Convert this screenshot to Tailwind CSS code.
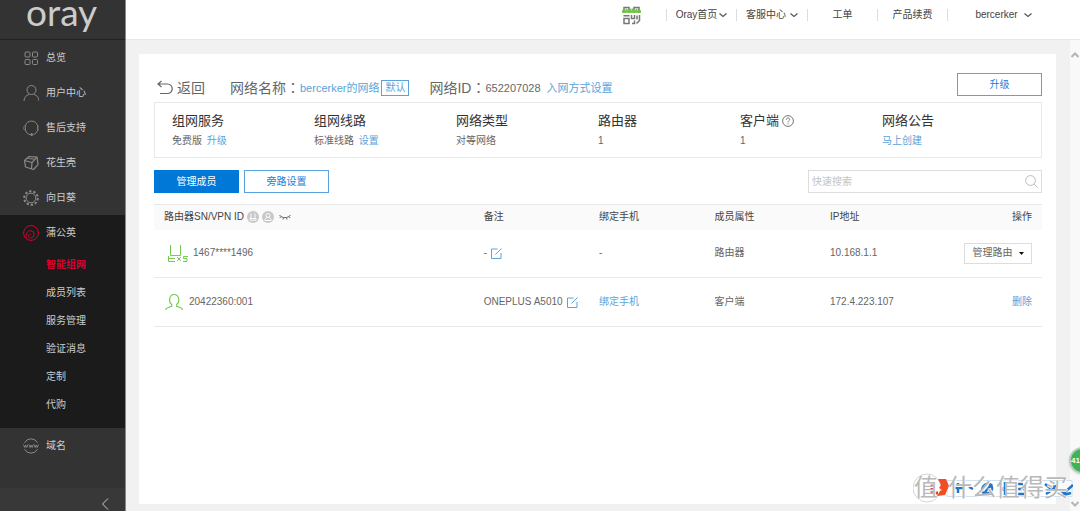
<!DOCTYPE html>
<html lang="zh-CN">
<head>
<meta charset="utf-8">
<meta name="viewport" content="width=device-width, initial-scale=1">
<title>Oray - 智能组网</title>
<script src="https://cdn.jsdelivr.net/npm/@tailwindcss/browser@4"></script>
</head>
<body class="relative flex min-h-screen overflow-hidden bg-[#f1f1f1] font-['Liberation_Sans','Noto_Sans_CJK_SC',sans-serif] text-[10px] leading-4 text-[#666]">

<aside class="flex w-[126px] shrink-0 flex-col border-r border-[#888] bg-[#333] text-[#ccc]">
  <a href="#" class="flex h-10 items-start border-b border-[#222] pl-[26px] font-['Lato',sans-serif] text-[37px] leading-6 text-[#ccc]">oray</a>
  <nav class="flex flex-1 flex-col">
    <a href="#" class="flex h-[35px] items-center gap-[7px] pl-[23px]">
      <svg class="size-4" viewBox="0 0 16 16" fill="none" stroke="#8a8a8a"><rect x="2" y="2" width="5" height="5" rx="1"/><rect x="9.500" y="2" width="5" height="5" rx="1"/><rect x="2" y="9.500" width="5" height="5" rx="1"/><rect x="9.500" y="9.500" width="5" height="5" rx="1"/></svg>总览</a>
    <a href="#" class="flex h-[35px] items-center gap-[7px] pl-[23px]">
      <svg class="size-4" viewBox="0 0 16 16" fill="none" stroke="#8a8a8a"><circle cx="8.500" cy="5" r="4.500"/><path d="M1 16c0-3.500 2-5.500 5-6.600M16 16c0-3.500-2-5.500-5-6.600"/></svg>用户中心</a>
    <a href="#" class="flex h-[35px] items-center gap-[7px] pl-[23px]">
      <svg class="size-4" viewBox="0 0 16 16" fill="none" stroke="#8a8a8a"><path d="M2.500 5.500a6.300 6.300 0 0 1 12 0M2.500 10.500c.8 2.200 2.500 3.800 5 4.200M14.500 10.500c-.7 2-2 3.300-4 3.900"/><path d="M2.500 5.500v5C.2 10.500.2 5.500 2.500 5.500zM14.500 5.500v5c2.200 0 2.200-5 0-5z" stroke-width=".8"/><circle cx="8.700" cy="14.600" r="1" fill="#8a8a8a"/></svg>售后支持</a>
    <a href="#" class="flex h-[35px] items-center gap-[7px] pl-[23px]">
      <svg class="size-4" viewBox="0 0 16 16" fill="none" stroke="#8a8a8a" stroke-width="1.200" stroke-linejoin="round"><path d="M1.500 5.500 6 1.500l8 .7 1 7.500-4.500 4.800-8-2.500zM1.500 5.500l7.500 2 5-5.300M9 7.500l-.5 6.400M5 3.500l6 .5"/></svg>花生壳</a>
    <a href="#" class="flex h-[35px] items-center gap-[7px] pl-[23px]">
      <svg class="size-4" viewBox="0 0 16 16" fill="none" stroke="#8a8a8a"><circle cx="8" cy="8" r="4.800"/><circle cx="8" cy="8" r="6.800" stroke-width="2" stroke-dasharray="2.400 1.872"/></svg>向日葵</a>
    <div class="bg-[#1b1b1b] pb-[9px]">
      <a href="#" class="flex h-9 items-center gap-[7px] pl-[23px]">
        <svg class="size-4" viewBox="0 0 16 16" fill="none" stroke="#d8002f"><circle cx="8" cy="8" r="7.400"/><path d="M3 13.300C2.800 8.500 4.500 5.700 7.500 5.700a3.700 3.700 0 0 1 0 7.400c-1.200 0-2-.8-2-1.900s.8-1.900 2-1.900"/></svg>蒲公英</a>
      <a href="#" class="flex h-7 items-center pl-[46px] font-bold text-[#d8002f]">智能组网</a>
      <a href="#" class="flex h-7 items-center pl-[46px]">成员列表</a>
      <a href="#" class="flex h-7 items-center pl-[46px]">服务管理</a>
      <a href="#" class="flex h-7 items-center pl-[46px]">验证消息</a>
      <a href="#" class="flex h-7 items-center pl-[46px]">定制</a>
      <a href="#" class="flex h-7 items-center pl-[46px]">代购</a>
    </div>
    <a href="#" class="flex h-[35px] items-center gap-[7px] pl-[23px]">
      <svg class="size-4" viewBox="0 0 16 16" fill="none" stroke="#8a8a8a"><path d="M1.500 4.800a7.300 7.300 0 0 1 13 0M1.500 11.200a7.300 7.300 0 0 0 13 0"/><path d="m.5 6.500 1.200 3 1-2.500 1 2.500 1.300-3m.9 0 1.200 3 1-2.500 1 2.500 1.200-3m.7 0 1.200 3 1-2.500 1 2.500 1.200-3" stroke-width=".9"/></svg>域名</a>
  </nav>
  <button type="button" aria-label="收起菜单" class="flex h-[23px] items-center justify-end bg-[#383838] pt-2 pr-4">
    <svg class="h-3 w-2" viewBox="0 0 8 12" fill="none" stroke="#ccc"><path d="M7 .5 1.500 6 7 11.500"/></svg>
  </button>
</aside>

<div class="flex min-w-0 flex-1 flex-col">
  <header class="flex h-10 shrink-0 items-start justify-end border-b border-[#e8e8e8] bg-white pr-[21px] text-[#444]">
    <svg class="mt-1.5 mr-6 h-[19px] w-[21px]" viewBox="0 0 21 19" fill="none" stroke="#777" stroke-width="1.500"><path d="M3 7V1.500h5V7M13 7V1.500h5V7M3 12.500h5v5H3zM2.500 9.700h6M10.500 9v3.500h3V9M11 17.500h2.500v-3M16 9.500v4M18.500 9v5.500L15.500 17.500"/><path d="M1 5.500h19" stroke="#69c73c" stroke-width="2.600"/><path d="M4.500 3.500h2M9.500 2.500v2M11.500 2.500v2M14.500 3.500h2" stroke="#69c73c" stroke-width="1.500"/></svg>
    <nav class="flex h-[30px] items-center">
      <a href="#" class="flex h-3 w-[70px] items-center justify-center gap-0.5 border-l border-[#ddd]">Oray首页<svg class="h-2 w-2" viewBox="0 0 8 8" fill="none" stroke="#555" stroke-width="1.200"><path d="m.5 2.500 3.500 3 3.500-3"/></svg></a>
      <a href="#" class="flex h-3 w-[71px] items-center justify-center gap-1 border-l border-[#ddd]">客服中心<svg class="h-2 w-2" viewBox="0 0 8 8" fill="none" stroke="#555" stroke-width="1.200"><path d="m.5 2.500 3.500 3 3.500-3"/></svg></a>
      <a href="#" class="flex h-3 w-[70px] items-center justify-center border-l border-[#ddd]">工单</a>
      <a href="#" class="flex h-3 w-[70px] items-center justify-center border-l border-[#ddd]">产品续费</a>
      <a href="#" class="flex h-3 w-28 items-center justify-center gap-1.5 border-l border-[#ddd]">bercerker<svg class="h-2 w-2" viewBox="0 0 8 8" fill="none" stroke="#555" stroke-width="1.200"><path d="m.5 2.500 3.500 3 3.500-3"/></svg></a>
    </nav>
  </header>

  <div class="flex flex-1">
    <main class="mx-3.5 mt-3.5 mb-[7px] ml-[13px] min-w-0 flex-1 bg-white px-3.5 pt-[19px] pl-[15px]">
      <div class="flex items-start justify-between">
        <div class="flex h-[29px] items-center">
          <a href="#" class="flex items-center gap-1 pl-[3px] text-[14px]"><svg class="h-4 w-4" viewBox="0 0 16 16" fill="none" stroke="#666" stroke-width="1.200"><path d="M4.500 1 1 4l3.500 3M1 4h9.500a4.700 4.700 0 0 1 0 9.500H3"/></svg>返回</a>
          <h1 class="ml-[25px] text-[14px]">网络名称<span class="font-['Noto_Sans_CJK_TC',sans-serif]" lang="zh-TW">：</span></h1>
          <a href="#" class="text-[11px] text-[#5ba3d9]">bercerker的网络</a>
          <span class="ml-0.5 border border-[#5ba3d9] px-[3px] leading-[14px] text-[#5ba3d9]">默认</span>
          <h2 class="ml-5 text-[14px]">网络ID<span class="font-['Noto_Sans_CJK_TC',sans-serif]" lang="zh-TW">：</span></h2>
          <span class="text-[11px]">652207028</span>
          <a href="#" class="ml-1.5 text-[11px] text-[#5ba3d9]">入网方式设置</a>
        </div>
        <button type="button" class="h-[23px] w-[85px] border border-[#5ba3e0] text-[#1b80dc]">升级</button>
      </div>

      <section class="grid h-14 grid-cols-6 border border-[#e8e8e8] px-[17px] pt-2.5">
        <div><h3 class="text-[13px] text-[#333]">组网服务</h3><p class="mt-1">免费版 <a href="#" class="ml-0.5 text-[#5ba3d9]">升级</a></p></div>
        <div><h3 class="text-[13px] text-[#333]">组网线路</h3><p class="mt-1">标准线路 <a href="#" class="ml-0.5 text-[#5ba3d9]">设置</a></p></div>
        <div><h3 class="text-[13px] text-[#333]">网络类型</h3><p class="mt-1">对等网络</p></div>
        <div><h3 class="text-[13px] text-[#333]">路由器</h3><p class="mt-1">1</p></div>
        <div><h3 class="flex items-center gap-[3px] text-[13px] text-[#333]">客户端<svg class="size-3" viewBox="0 0 12 12" fill="none" stroke="#666" stroke-width=".9"><circle cx="6" cy="6" r="5.400"/><path d="M4.300 4.700c0-2.300 3.400-2.200 3.400-.2C7.700 5.800 6 5.800 6 7.300M6 8.300v1"/></svg></h3><p class="mt-1">1</p></div>
        <div><h3 class="text-[13px] text-[#333]">网络公告</h3><p class="mt-1"><a href="#" class="text-[#5ba3d9]">马上创建</a></p></div>
      </section>

      <div class="mt-3 flex items-center justify-between">
        <div class="flex gap-[5px]">
          <button type="button" class="h-[23px] w-[85px] border border-[#0078d7] bg-[#0078d7] text-white">管理成员</button>
          <button type="button" class="h-[23px] w-[85px] border border-[#5ba3e0] text-[#1b80dc]">旁路设置</button>
        </div>
        <label class="flex h-[23px] w-[234px] items-center border border-[#ddd] px-[3px]">
          <input type="text" aria-label="快速搜索" placeholder="快速搜索" class="min-w-0 flex-1 outline-none placeholder:text-[#c4c4c4]">
          <svg class="size-[13px]" viewBox="0 0 13 13" fill="none" stroke="#bbb"><circle cx="5.500" cy="5.500" r="4.900"/><path d="m9 9 3.700 3.700"/></svg>
        </label>
      </div>

      <table class="mt-[11px] w-full table-fixed border-collapse text-left">
        <thead>
          <tr class="h-[25px] border-t border-[#e8e8e8] bg-[#fafafa] text-[#444]">
            <th class="w-[36%] pl-2.5 font-normal">
              <div class="flex items-center gap-[3px]">路由器SN/VPN ID
                <svg class="size-3" viewBox="0 0 12 12" fill="none" stroke="#fff" stroke-width=".9"><circle cx="6" cy="6" r="6" fill="#c8c8c8" stroke="none"/><path d="M4 2.500v5M8 2.500v5M3 7.500h6v1.700H3z"/></svg>
                <svg class="size-3" viewBox="0 0 12 12" fill="none" stroke="#fff" stroke-width=".9"><circle cx="6" cy="6" r="6" fill="#c8c8c8" stroke="none"/><circle cx="6" cy="4.500" r="2"/><path d="M2.800 9.500c0-2 1.400-2.500 2.400-3M9.200 9.500c0-2-1.400-2.500-2.400-3M3 9.500h6"/></svg>
                <svg class="ml-0.5 h-2 w-3" viewBox="0 0 12 8" fill="none" stroke="#666"><path d="M.5 2c2.500 3.500 8.500 3.500 11 0M2 3.500.8 5M4.500 4.800 4 6.500M7.500 4.800 8 6.500M10 3.500 11.200 5"/></svg>
              </div>
            </th>
            <th class="w-[13%] pl-2.5 font-normal">备注</th>
            <th class="w-[13%] pl-2.5 font-normal">绑定手机</th>
            <th class="w-[13%] pl-2.5 font-normal">成员属性</th>
            <th class="w-[25%] pl-2.5 font-normal"><div class="flex justify-between pr-2.5"><span>IP地址</span><span>操作</span></div></th>
          </tr>
        </thead>
        <tbody>
          <tr class="h-12 border-b border-[#e8e8e8]">
            <td class="pl-3"><div class="flex items-center gap-1"><svg class="h-[19px] w-[23px]" viewBox="0 0 23 19" fill="none" stroke="#72cc50"><path d="M4.500 1v10.500h10V1M2.500 12v5.500H9M2.500 14.500H9M11 13l4 4M15 13l-4 4M22 12.500h-4.500v2h3.500v3h-4"/></svg>1467****1496</div></td>
            <td class="pl-2.5"><div class="flex items-center gap-1">-<button type="button" aria-label="编辑备注"><svg class="size-[11px]" viewBox="0 0 11 11" fill="none" stroke="#5ba3d9"><path d="M6.500 1H.5v9.500H10V5M4.500 6.500 10.500.5"/></svg></button></div></td>
            <td class="pl-2.5">-</td>
            <td class="pl-2.5">路由器</td>
            <td class="pl-2.5"><div class="flex items-center justify-between pr-2.5"><span>10.168.1.1</span><button type="button" class="flex h-[21px] w-[68px] items-center justify-center gap-1.5 border border-[#ddd]">管理路由<svg class="h-[3px] w-[5px]" viewBox="0 0 5 3" fill="#111"><path d="M0 0h5L2.500 3z"/></svg></button></div></td>
          </tr>
          <tr class="h-[49px] border-b border-[#e8e8e8]">
            <td class="pl-[11px]"><div class="flex items-center gap-1.5"><svg class="h-[18px] w-[18px]" viewBox="0 0 18 18" fill="none" stroke="#72cc50" stroke-width="1.200"><path d="M.7 17c0-1.500 1-2 2.500-2.500l3.500-1.200v-1.800C3.400 9.500 3.800 1.500 9.200 1.500s5.800 8 2.500 10v1.800l3.500 1.200c1.500.5 2.300 1 2.300 2.500"/></svg>20422360:001</div></td>
            <td class="pl-2.5"><div class="flex items-center gap-1 whitespace-nowrap">ONEPLUS A5010<button type="button" aria-label="编辑备注"><svg class="size-[11px]" viewBox="0 0 11 11" fill="none" stroke="#5ba3d9"><path d="M6.500 1H.5v9.500H10V5M4.500 6.500 10.500.5"/></svg></button></div></td>
            <td class="pl-2.5"><a href="#" class="text-[#5ba3d9]">绑定手机</a></td>
            <td class="pl-2.5">客户端</td>
            <td class="pl-2.5"><div class="flex justify-between pr-2.5"><span>172.4.223.107</span><a href="#" class="text-[#5ba3d9]">删除</a></div></td>
          </tr>
        </tbody>
      </table>
    </main>
    <div class="flex w-2.5 shrink-0 flex-col items-center justify-between bg-[#f9f9f9] pt-3 pb-1">
      <svg class="h-[6px] w-2" viewBox="0 0 8 6" fill="none" stroke="#b5b5b5" stroke-width="2"><path d="m.5 5 3.500-3.500L7.500 5"/></svg>
      <svg class="h-[6px] w-2" viewBox="0 0 8 6" fill="none" stroke="#b5b5b5" stroke-width="2"><path d="m.5 1 3.500 3.500L7.500 1"/></svg>
    </div>
  </div>
</div>

<!-- Floating badge at the window edge -->
<div class="absolute right-[-16px] bottom-[37px] flex size-[27px] items-center rounded-full border-2 border-[#b9c9bb] bg-[#3bb557] text-[8px] font-bold text-white shadow">41</div>

<!-- Input-method bar with the site watermark over it -->
<div class="absolute right-[7px] bottom-[5px] h-[36px] w-[160px]">
  <svg class="h-full w-full" viewBox="0 0 160 36" fill="none">
    <path d="M34 10.500h125v16H34z" fill="#fff" fill-opacity=".7" stroke="#cfe0ef"/>
    <circle cx="14" cy="18" r="14" fill="#fff" fill-opacity=".35" stroke="#d5d5d5"/>
    <path d="M25 9h8l3 7-4 9-8 1 3-5 2-1-3-2 2-3z" fill="#f04e23"/><path d="M19 13v10h6" stroke="#cc451c" stroke-width="3"/>
    <path d="M40 18h10M45 13v10M56 17l4 2M69 23c-1-12 11-11 10-4-1 5-7 5-10 3M72 22l7-8M92 12v13M89 17v4M103 14h7M103 19h8M102 24h9M132 14l5 4 6-2M133 24l9-6M147 20l4 3 9-8M150 25l8-2" stroke="#2375c7" stroke-width="2.500"/>
  </svg>
  <div class="absolute inset-0 flex items-center gap-2.5 whitespace-nowrap pl-px text-[24px] leading-6 text-[#b9b9b9] [text-shadow:1px_0_#fff,0_1px_#fff]"><span>值</span><span>什么值得买</span></div>
</div>
</body>
</html>
